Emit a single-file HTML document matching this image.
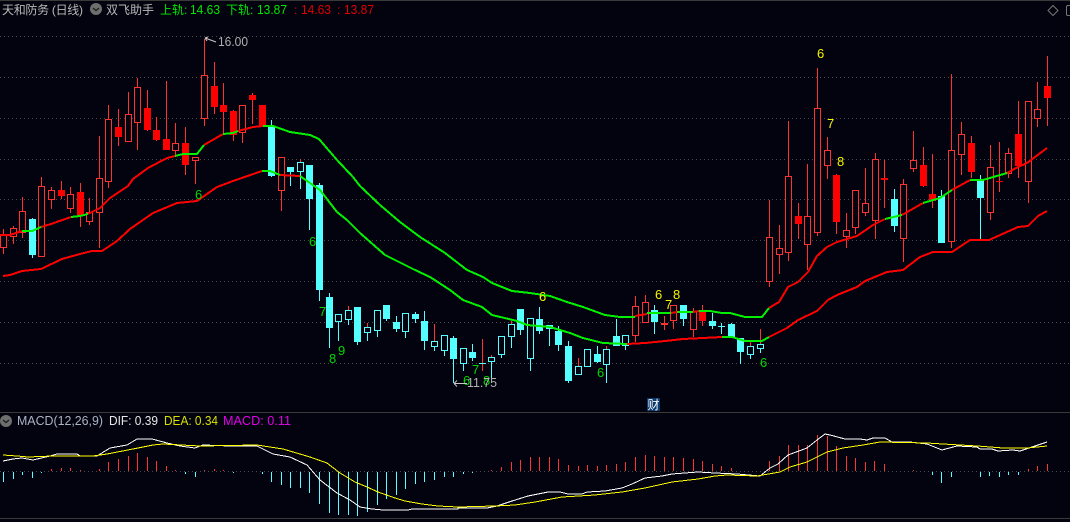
<!DOCTYPE html>
<html><head><meta charset="utf-8"><title>MACD</title>
<style>
html,body{margin:0;padding:0;background:#03030f;width:1070px;height:522px;overflow:hidden}
svg{display:block}
text{font-family:"Liberation Sans","Noto Sans CJK SC",sans-serif;font-size:12px}
.cn{font-family:"Liberation Sans","Noto Sans CJK SC",sans-serif;font-size:12px}
.d{font-size:13px}
.n{font-size:13px}
.g{fill:#00d800}.y{fill:#f4f400}
</style></head><body>
<svg width="1070" height="522" viewBox="0 0 1070 522" xmlns="http://www.w3.org/2000/svg">
<rect width="1070" height="522" fill="#03030f"/>
<rect width="1070" height="1" fill="#3a3a3a"/>
<rect y="412" width="1070" height="1" fill="#3a3a3a"/>
<rect y="518" width="1070" height="1" fill="#3a3a3a"/>
<path d="M0 36.5H1070M0 77.5H1070M0 118.5H1070M0 159.5H1070M0 199.5H1070M0 240.5H1070M0 281.5H1070M0 322.5H1070M0 363.5H1070M0 471.5H1070" stroke="#4a4a4a" stroke-width="1" stroke-dasharray="1 3" fill="none"/>

<!-- wicks -->
<g shape-rendering="crispEdges" stroke-width="1" fill="none">
<path stroke="#ff3232" d="M3.5 229V254M13.5 226V244M22.5 197V238M41.5 177V257M51.5 187V209M61.5 181V199M70.5 187V213M80.5 183V227M89.5 198V225M99.5 136V248M108.5 105V188M118.5 109V146M128.5 92V142M137.5 78V150M147.5 90V131M156.5 117V141M166.5 81V150M175.5 123V157M185.5 127V175M195.5 157V184M204.5 39V126M214.5 62V114M223.5 83V135M233.5 110V141M242.5 105V143M252.5 93V124M262.5 105V127M281.5 157V211M300.5 159V162M348.5 306V310M367.5 323V327M434.5 324V341M482.5 339V371M491.5 355V357M511.5 321V324M578.5 358V366M606.5 346V349M750.5 342V346M760.5 329V344M635.5 296V342M645.5 295V323M664.5 316V330M673.5 305V329M693.5 308V337M702.5 305V326M769.5 200V287M779.5 225V274M788.5 121V261M798.5 203V239M807.5 164V270M817.5 68V236M827.5 137V179M836.5 174V234M846.5 213V248M855.5 190V234M865.5 168V216M875.5 153V239M884.5 160V208M903.5 179V262M913.5 131V172M923.5 147V187M932.5 154V208M951.5 74V248M961.5 122V175M971.5 136V178M990.5 145V220M999.5 142V192M1008.5 148V178M1018.5 101V178M1028.5 101V203M1037.5 82V127M1047.5 56V126"/>
<path stroke="#54ffff" d="M32.5 218V258M271.5 120V177M290.5 167V186M300.5 172V189M309.5 165V230M319.5 183V301M329.5 293V348M338.5 322V341M348.5 320V325M357.5 307V345M367.5 333V341M377.5 331V337M386.5 305V321M396.5 316V332M405.5 332V338M415.5 312V323M424.5 311V350M434.5 347V351M444.5 351V356M453.5 336V383M463.5 364V371M472.5 344V361M491.5 362V383M501.5 355V358M511.5 337V348M520.5 309V335M530.5 359V371M539.5 307V334M549.5 329V346M558.5 326V351M568.5 341V383M597.5 346V363M606.5 365V383M616.5 319V346M625.5 346V350M654.5 305V334M683.5 305V326M712.5 313V329M721.5 323V334M731.5 323V338M740.5 352V364M750.5 355V359M760.5 349V353M894.5 189V232M941.5 190V243M980.5 175V240"/>
</g>

<!-- filled bodies -->
<g shape-rendering="crispEdges">
<path fill="#ff0000" d="M58 190h7v6h-7zM77 192h7v24h-7zM115 127h7v10h-7zM144 108h7v22h-7zM153 130h7v10h-7zM163 139h7v11h-7zM182 143h7v22h-7zM211 86h7v21h-7zM220 105h7v7h-7zM230 111h7v24h-7zM249 95h7v5h-7zM259 105h7v22h-7zM699 310h7v11h-7zM795 216h7v8h-7zM833 175h7v47h-7zM881 178h7v2h-7zM920 165h7v21h-7zM929 194h7v7h-7zM968 143h7v29h-7zM996 181h7v1h-7zM1015 134h7v32h-7zM1044 86h7v12h-7z"/>
<path fill="#54ffff" d="M29 219h7v36h-7zM268 126h7v50h-7zM287 167h7v5h-7zM306 165h7v34h-7zM316 185h7v105h-7zM326 297h7v31h-7zM354 307h7v35h-7zM383 305h7v14h-7zM393 322h7v7h-7zM412 314h7v5h-7zM421 321h7v20h-7zM450 338h7v21h-7zM469 352h7v6h-7zM479 363h7v1h-7zM517 309h7v21h-7zM536 319h7v12h-7zM546 325h7v4h-7zM555 331h7v14h-7zM565 346h7v35h-7zM594 354h7v8h-7zM613 336h7v10h-7zM651 310h7v12h-7zM680 305h7v14h-7zM709 321h7v5h-7zM718 326h7v1h-7zM728 324h7v14h-7zM737 338h7v14h-7zM891 199h7v27h-7zM938 196h7v47h-7zM977 180h7v18h-7z"/>
<!-- hollow bodies -->
<path fill="#03030f" stroke="#ff3232" stroke-width="1" d="M0.5 235.5h6v12h-6zM10.5 228.5h6v8h-6zM19.5 211.5h6v21h-6zM38.5 186.5h6v70h-6zM48.5 190.5h6v9h-6zM67.5 194.5h6v14h-6zM86.5 212.5h6v9h-6zM96.5 178.5h6v34h-6zM105.5 119.5h6v62h-6zM125.5 114.5h6v27h-6zM134.5 87.5h6v35h-6zM172.5 143.5h6v7h-6zM192.5 157.5h6v3h-6zM201.5 75.5h6v43h-6zM239.5 105.5h6v27h-6zM278.5 157.5h6v33h-6zM632.5 306.5h6v29h-6zM642.5 302.5h6v20h-6zM661.5 323.5h6v1h-6zM670.5 305.5h6v15h-6zM690.5 311.5h6v18h-6zM766.5 237.5h6v44h-6zM776.5 248.5h6v6h-6zM785.5 176.5h6v76h-6zM804.5 216.5h6v28h-6zM814.5 108.5h6v124h-6zM824.5 150.5h6v15h-6zM843.5 230.5h6v6h-6zM852.5 190.5h6v37h-6zM862.5 203.5h6v9h-6zM872.5 159.5h6v61h-6zM900.5 184.5h6v54h-6zM910.5 160.5h6v8h-6zM948.5 150.5h6v91h-6zM958.5 134.5h6v20h-6zM987.5 167.5h6v45h-6zM1005.5 153.5h6v20h-6zM1025.5 101.5h6v80h-6zM1034.5 109.5h6v9h-6z"/>
<path fill="#03030f" stroke="#54ffff" stroke-width="1" d="M297.5 162.5h6v9h-6zM335.5 314.5h6v7h-6zM345.5 310.5h6v9h-6zM364.5 327.5h6v5h-6zM374.5 310.5h6v20h-6zM402.5 313.5h6v18h-6zM431.5 341.5h6v5h-6zM441.5 335.5h6v15h-6zM460.5 348.5h6v15h-6zM488.5 357.5h6v4h-6zM498.5 336.5h6v18h-6zM508.5 324.5h6v12h-6zM527.5 318.5h6v40h-6zM575.5 366.5h6v8h-6zM584.5 349.5h6v17h-6zM603.5 349.5h6v15h-6zM622.5 335.5h6v10h-6zM747.5 346.5h6v8h-6zM757.5 344.5h6v4h-6z"/>
</g>

<!-- bands -->
<g fill="none" stroke-width="2" shape-rendering="crispEdges">
<g stroke="#fe0000">
<polyline points="0,235 10,235 22,231"/>
<polyline points="41,227 51,224 71,217"/>
<polyline points="88,214 100,208 110,198 128,186 133,179 148,168 167,158 175,156"/>
<polyline points="204,145 223,134"/>
<polyline points="238,131 253,127 263,126"/>
<polyline points="635,316 647,314"/>
<polyline points="671,313 677,312"/>
<polyline points="693,312 699,311"/>
<polyline points="769,308 779,302 788,287 798,282 808,272 817,256 827,247 837,242 847,239 857,236 873,225 885,219"/>
<polyline points="902,215 923,203"/>
<polyline points="952,190 970,180"/>
<polyline points="1007,173 1018,167 1027,163 1047,148"/>
<polyline points="3,276 10,275 22,271 41,269 62,259 80,254 92,251 102,251 117,241 130,229 153,213 177,203 197,201 217,187 233,181 262,171"/>
<polyline points="280,175 300,176"/>
<polyline points="627,344 645,343 665,341 683,339 703,338 722,337"/>
<polyline points="769,337 787,328 798,320 817,311 828,300 837,295 857,287 865,281 887,272 903,270 920,257 933,252 952,252 970,240 989,240 1018,227 1028,226 1038,216 1047,211"/>
</g>
<g stroke="#00f000">
<polyline points="22,231 32,231 41,227"/>
<polyline points="71,217 80,216 88,214"/>
<polyline points="175,156 183,154 197,154 204,145"/>
<polyline points="223,134 233,133 238,131"/>
<polyline points="263,126 273,126 290,132 310,135 319,139 337,160 353,177 360,186 380,205 400,222 420,237 445,253 467,270 483,277 492,283 512,291 530,293 550,296 567,302 583,307 605,315 620,317 635,317"/>
<polyline points="647,313 671,313"/>
<polyline points="677,312 693,312"/>
<polyline points="699,311 710,311 722,313 730,313 745,317 762,317 769,308"/>
<polyline points="885,219 902,215"/>
<polyline points="923,203 940,198 952,190"/>
<polyline points="970,180 983,180 1007,173"/>
<polyline points="262,171 270,171 280,175"/>
<polyline points="300,176 320,190 337,212 347,220 360,233 385,255 415,270 430,277 450,290 463,300 482,307 492,315 517,321 527,325 550,327 570,333 583,338 603,343 627,344"/>
<polyline points="722,337 732,337 745,341 762,341 769,337"/>
</g>
</g>

<!-- header -->
<text class="cn" x="2" y="14" fill="#b8b8b8" textLength="81">天和防务 (日线)</text>
<circle cx="96" cy="9" r="6" fill="#6e6e6e"/>
<path d="M93 8l3 2.5L99 8" stroke="#1c1c1c" stroke-width="1.3" fill="none"/>
<text class="cn" x="106" y="14" fill="#b8b8b8">双飞助手</text>
<text class="cn" x="160" y="14" fill="#00e800">上轨:</text>
<text class="d" x="190" y="14" fill="#00e800" textLength="30" lengthAdjust="spacingAndGlyphs">14.63</text>
<text class="cn" x="226" y="14" fill="#00e800">下轨:</text>
<text class="d" x="257" y="14" fill="#00e800" textLength="30" lengthAdjust="spacingAndGlyphs">13.87</text>
<text x="294" y="14" fill="#e00000">:</text>
<text class="d" x="301" y="14" fill="#e00000" textLength="30" lengthAdjust="spacingAndGlyphs">14.63</text>
<text x="337" y="14" fill="#e00000">:</text>
<text class="d" x="344" y="14" fill="#e00000" textLength="30" lengthAdjust="spacingAndGlyphs">13.87</text>
<path d="M1053 5.5l5 5-5 5-5-5z" fill="none" stroke="#777" stroke-width="1"/>
<rect x="1066.5" y="5.5" width="8" height="10" rx="1.5" fill="none" stroke="#777" stroke-width="1"/>

<!-- price labels -->
<text class="d" x="218" y="46" fill="#b0b0b0" textLength="30" lengthAdjust="spacingAndGlyphs">16.00</text>
<path d="M205 38l11 4M205 38l3-1M205 38l2 3" stroke="#c8c8c8" stroke-width="1" fill="none"/>
<text class="n g" x="463" y="385">6</text>
<text class="n g" x="483" y="385">8</text>
<text class="d" x="467" y="387" fill="#b0b0b0" textLength="30" lengthAdjust="spacingAndGlyphs">11.75</text>
<path d="M467 383.5H454M454 383.5l3-3M454 383.5l3 3" stroke="#c8c8c8" stroke-width="1" fill="none"/>

<text class="n g" x="195" y="199">6</text>
<text class="n g" x="309" y="246">6</text>
<text class="n g" x="319" y="316">7</text>
<text class="n g" x="329" y="363">8</text>
<text class="n g" x="338" y="355">9</text>
<text class="n g" x="472" y="374">7</text>
<text class="n g" x="597" y="377">6</text>
<text class="n g" x="760" y="367">6</text>
<text class="n y" x="539" y="301">6</text>
<text class="n y" x="655" y="299">6</text>
<text class="n y" x="665" y="309">7</text>
<text class="n y" x="673" y="299">8</text>
<text class="n y" x="817" y="58">6</text>
<text class="n y" x="827" y="128">7</text>
<text class="n y" x="837" y="166">8</text>

<rect x="647" y="398" width="13" height="13" fill="#0a3a6e"/>
<text class="cn" x="647.5" y="409" fill="#fff">财</text>

<!-- MACD header -->
<circle cx="6" cy="421" r="6" fill="#6e6e6e"/>
<path d="M3 420l3 2.5L9 420" stroke="#1c1c1c" stroke-width="1.3" fill="none"/>
<text class="d" x="17" y="425" fill="#a9b4c4" textLength="86" lengthAdjust="spacingAndGlyphs">MACD(12,26,9)</text>
<text class="d" x="109" y="425" fill="#e8e8e8" textLength="49" lengthAdjust="spacingAndGlyphs">DIF: 0.39</text>
<text class="d" x="164" y="425" fill="#d8e000" textLength="54" lengthAdjust="spacingAndGlyphs">DEA: 0.34</text>
<text class="d" x="223" y="425" fill="#e000e8" textLength="68" lengthAdjust="spacingAndGlyphs">MACD: 0.11</text>

<!-- MACD bars -->
<g shape-rendering="crispEdges" fill="none" stroke-width="1">
<path stroke="#ff3232" d="M51.5 471V469M61.5 471V468M70.5 471V468M80.5 471V470M99.5 471V469M108.5 471V462M118.5 471V459M128.5 471V456M137.5 471V453M147.5 471V457M156.5 471V461M166.5 471V466M175.5 471V470M204.5 471V470M214.5 471V469M223.5 471V470M491.5 471V470M501.5 471V467M511.5 471V462M520.5 471V460M530.5 471V457M539.5 471V457M549.5 471V457M558.5 471V459M568.5 471V465M578.5 471V466M587.5 471V465M597.5 471V466M606.5 471V465M616.5 471V464M625.5 471V462M635.5 471V457M645.5 471V455M654.5 471V456M664.5 471V457M673.5 471V457M683.5 471V458M693.5 471V459M702.5 471V461M712.5 471V464M721.5 471V466M731.5 471V468M769.5 471V461M779.5 471V456M788.5 471V445M798.5 471V445M807.5 471V445M817.5 471V435M827.5 471V436M836.5 471V446M846.5 471V456M855.5 471V458M865.5 471V462M874.5 471V461M884.5 471V464M913.5 471V470M1028.5 471V469M1037.5 471V466M1047.5 471V464"/>
<path stroke="#54ffff" d="M3.5 472V482M13.5 472V479M22.5 472V475M32.5 472V478M41.5 472V473M185.5 472V474M195.5 472V477M233.5 472V473M262.5 472V474M271.5 472V482M281.5 472V485M290.5 472V488M300.5 472V488M309.5 472V493M319.5 472V504M329.5 472V513M338.5 472V515M348.5 472V515M357.5 472V516M367.5 472V512M377.5 472V505M386.5 472V499M396.5 472V495M405.5 472V489M415.5 472V484M424.5 472V482M434.5 472V480M444.5 472V477M453.5 472V477M463.5 472V474M472.5 472V473M932.5 472V475M941.5 472V483M951.5 472V477M980.5 472V477M989.5 472V476M999.5 472V477M1008.5 472V475M1018.5 472V475"/>
</g>
<g fill="none" stroke-width="1" shape-rendering="crispEdges">
<polyline stroke="#ffffff" points="3,461 13,459 22,458 33,460 50,456 57,454 77,454 80,456 97,456 110,448 127,445 137,439 152,439 167,443 180,446 195,448 203,445 230,446 257,446 273,454 290,457 307,465 320,480 337,493 350,500 360,507 372,509 383,510 408,510 412,509 458,509 458,508 487,508 497,506 512,501 528,496 548,492 560,492 568,494 582,494 587,492 605,491 622,488 632,484 645,478 662,476 672,474 698,472 715,473 737,474 760,476 770,468 778,464 788,455 807,448 817,440 825,434 830,435 845,439 860,439 867,440 873,438 885,438 892,442 910,442 927,444 942,450 957,446 977,447 980,449 992,449 998,451 1013,450 1020,451 1032,447 1047,442"/>
<polyline stroke="#ffff00" points="3,455 17,456 28,457 53,456 93,456 107,454 133,449 153,445 163,444 200,446 257,445 283,449 310,457 327,463 340,473 355,482 367,487 378,492 395,498 405,501 422,504 438,506 458,507 495,506 515,505 535,502 562,497 595,495 622,492 645,488 672,482 698,479 715,476 727,475 757,476 780,472 790,467 807,462 827,452 843,448 863,445 880,442 927,443 943,444 977,446 1003,448 1027,448 1047,446"/>
</g>
</svg>
</body></html>
